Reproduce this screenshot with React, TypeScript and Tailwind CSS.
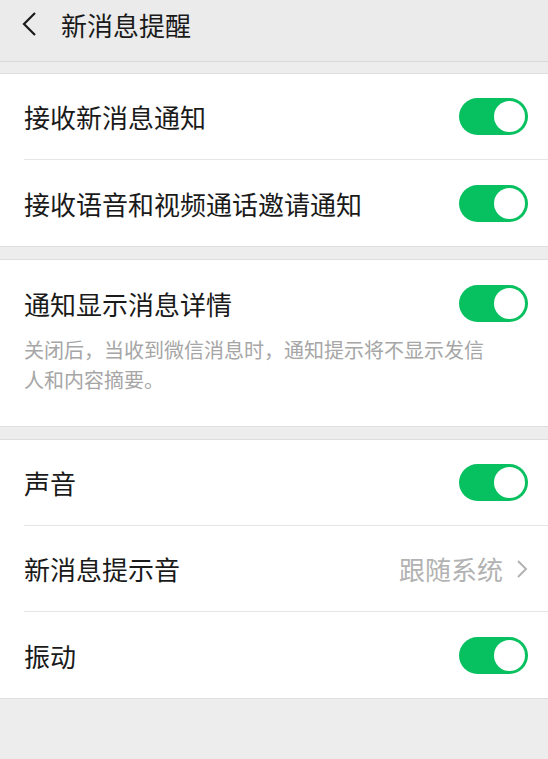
import React from 'react';

const font = { fontFamily: '"Noto Sans CJK SC", "Noto Sans", sans-serif' };

function Toggle() {
  return (
    <div className="flex h-[37px] w-[69px] items-center justify-end rounded-full bg-[#07c160] pr-[3px]">
      <div className="h-[31px] w-[31px] rounded-full bg-white" />
    </div>
  );
}

function Row({ title, last, right }: { title: string; last?: boolean; right: React.ReactNode }) {
  return (
    <div className={`ml-[24px] flex h-[86px] items-center justify-between pr-[20px] ${last ? '' : 'border-b border-[#e6e6e6]'}`}>
      <span className="text-[26px] text-[#1a1a1a]">{title}</span>
      {right}
    </div>
  );
}

export default function App() {
  return (
    <div className="min-h-[759px] bg-[#ededed]" style={font}>
      {/* header */}
      <div className="flex h-[62px] items-center border-b border-[#d9d9d9] bg-[#ebebeb] pb-[13px]">
        <svg width="16" height="26" viewBox="0 0 16 26" className="ml-[21px]">
          <polyline points="14,2 3,13 14,24" fill="none" stroke="#1a1a1a" strokeWidth="2.2" />
        </svg>
        <span className="ml-[24px] text-[26px] text-[#1a1a1a]">新消息提醒</span>
      </div>

      <div className="mt-[11px] border-y border-[#dedede] bg-white">
        <Row title="接收新消息通知" right={<Toggle />} />
        <Row title="接收语音和视频通话邀请通知" last right={<Toggle />} />
      </div>

      <div className="mt-[12px] border-y border-[#dedede] bg-white px-[24px] pb-[31px] pr-[20px] pt-[24px]">
        <div className="flex items-center justify-between">
          <span className="text-[26px] text-[#1a1a1a]">通知显示消息详情</span>
          <Toggle />
        </div>
        <p className="mt-[12px] w-[470px] text-[20px] leading-[30px] text-[#a6a6a6]">
          关闭后，当收到微信消息时，通知提示将不显示发信人和内容摘要。
        </p>
      </div>

      <div className="mt-[12px] border-y border-[#dedede] bg-white">
        <Row title="声音" right={<Toggle />} />
        <Row
          title="新消息提示音"
          right={
            <div className="flex items-center">
              <span className="text-[26px] text-[#b2b2b2]">跟随系统</span>
              <svg width="12" height="20" viewBox="0 0 12 20" className="ml-[13px]">
                <polyline points="2,2 10,10 2,18" fill="none" stroke="#b2b2b2" strokeWidth="2" />
              </svg>
            </div>
          }
        />
        <Row title="振动" last right={<Toggle />} />
      </div>
    </div>
  );
}
